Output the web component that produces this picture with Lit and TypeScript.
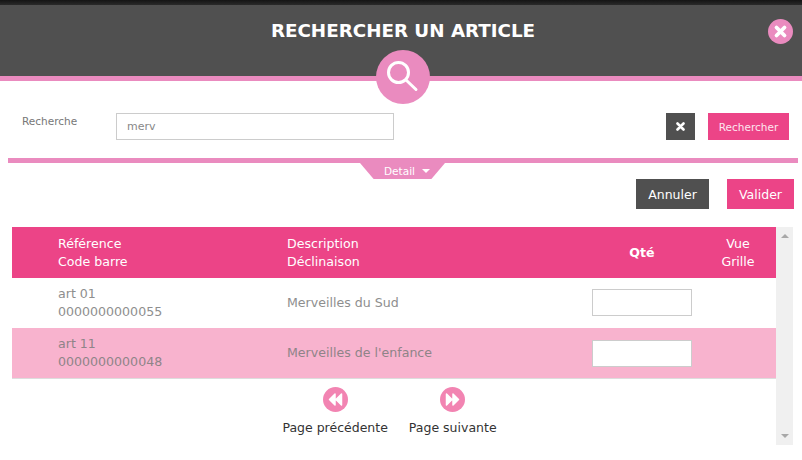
import { LitElement, html, css, svg } from 'lit';
import { customElement } from 'lit/decorators.js';

const rows = [
    { ref: 'art 01', code: '0000000000055', desc: 'Merveilles du Sud' },
    { ref: 'art 11', code: '0000000000048', desc: "Merveilles de l'enfance" },
];

const rewind = svg`<path d="M12 7 L6.5 12.5 L12 18 Z M18.5 7 L13 12.5 L18.5 18 Z" />`;
const forward = svg`<path d="M6.5 7 L12 12.5 L6.5 18 Z M13 7 L18.5 12.5 L13 18 Z" />`;

@customElement('app-root')
export class AppRoot extends LitElement {
    public static override styles = css`
        :host {
            display: block;
            width: 802px;
            height: 460px;
            overflow: hidden;
            background: #fff;
            font-family: "DejaVu Sans", sans-serif;
        }

        .topbar {
            height: 5px;
            background: linear-gradient(#141414, #2a2a2a);
        }

        .header {
            position: relative;
            height: 71px;
            display: flex;
            align-items: flex-start;
            justify-content: center;
            background: #505050;
            border-bottom: 5px solid #ea8bbf;
        }

        .header h1 {
            margin: 14px 0 0 4px;
            font-family: "DejaVu Sans", sans-serif;
            font-size: 18.3px;
            line-height: 24px;
            font-weight: 700;
            color: #fff;
        }

        .close {
            position: absolute;
            left: 768px;
            top: 14px;
            width: 25px;
            height: 25px;
            display: block;
        }

        .loupe {
            position: absolute;
            left: 376px;
            top: 45px;
            width: 54px;
            height: 54px;
            display: block;
        }

        .search {
            display: flex;
            align-items: flex-start;
            margin-top: 32px;
            padding: 0 13px 0 22px;
            height: 27px;
        }

        .search label {
            width: 94px;
            margin-top: 1px;
            font-size: 10.5px;
            line-height: 14px;
            color: #777;
        }

        .search input {
            box-sizing: border-box;
            width: 278px;
            height: 27px;
            padding: 0 10px;
            border: 1px solid #ccc;
            background: #fff;
            outline: none;
            font: 11px "DejaVu Sans", sans-serif;
            color: #888;
        }

        .clear {
            width: 29px;
            height: 27px;
            margin-left: auto;
            display: flex;
            align-items: center;
            justify-content: center;
            background: #505050;
        }

        .btn {
            display: flex;
            align-items: center;
            justify-content: center;
            color: #fff;
            font-size: 12.5px;
            background: #ec4487;
        }

        .btn.dark {
            background: #505050;
        }

        .search .btn {
            width: 81px;
            height: 27px;
            margin-left: 13px;
            font-size: 10.5px;
            color: #fde6ef;
        }

        .rule {
            height: 5px;
            margin: 18px 4px 0 8px;
            background: #ea8bbf;
        }

        .tab {
            width: 85px;
            height: 16px;
            margin-left: 360px;
            padding-left: 9px;
            box-sizing: border-box;
            display: flex;
            align-items: center;
            justify-content: center;
            gap: 7px;
            background: #ea8bbf;
            clip-path: polygon(0 0, 100% 0, 84% 100%, 16% 100%);
            color: #fff;
            font-size: 10.5px;
        }

        .tab i {
            width: 0;
            height: 0;
            border: 4px solid transparent;
            border-top: 4px solid #fff;
            border-bottom: 0;
        }

        .actions {
            display: flex;
            justify-content: flex-end;
            gap: 18px;
            padding-right: 8px;
            height: 30px;
        }

        .actions .dark {
            width: 73px;
        }

        .actions .btn:last-child {
            width: 67px;
        }

        .scroller {
            display: flex;
            width: 781px;
            height: 218px;
            margin: 18px 0 0 12px;
        }

        .list {
            flex: 1;
            min-width: 0;
        }

        .row {
            display: grid;
            grid-template-columns: 275px 293px 124px 72px;
            align-items: center;
            height: 50px;
            font-size: 12.6px;
            line-height: 18px;
            color: #8e8e8e;
        }

        .row.head {
            height: 51px;
            background: #ec4487;
            color: #fff;
        }

        .row.alt {
            background: #f8b3ce;
            color: #8f8488;
            border-bottom: 1px solid #ddd;
        }

        .row > div:first-child {
            padding-left: 46px;
        }

        .row .qty {
            text-align: center;
            font-weight: 700;
        }

        .row .view {
            padding-right: 4px;
            text-align: center;
        }

        .row input {
            box-sizing: border-box;
            display: block;
            width: 100px;
            height: 27px;
            margin: -2px auto 0;
            border: 1px solid #ccc;
            background: #fff;
        }

        .row.alt input {
            margin-top: 0;
        }

        .pager {
            display: flex;
            justify-content: center;
            gap: 21px;
            margin: 8px 9px 0 0;
        }

        .pager div {
            display: flex;
            flex-direction: column;
            align-items: center;
            gap: 8px;
            font-size: 12.5px;
            line-height: 16px;
            color: #333;
        }

        .pager svg {
            display: block;
            width: 25px;
            height: 25px;
            fill: #fff;
            stroke: #fff;
            stroke-width: 1.5;
            stroke-linejoin: round;
        }

        .scrollbar {
            width: 17px;
            display: flex;
            flex-direction: column;
            justify-content: space-between;
            align-items: center;
            padding: 7px 0;
            box-sizing: border-box;
            background: #f0f0f0;
        }

        .scrollbar i {
            width: 0;
            height: 0;
            border-left: 4px solid transparent;
            border-right: 4px solid transparent;
        }

        .scrollbar .up {
            border-bottom: 4px solid #a8a8a8;
        }

        .scrollbar .down {
            border-top: 4px solid #a8a8a8;
        }
    `;

    private pagerIcon(glyph: unknown) {
        return html`<svg viewBox="0 0 25 25">
            <circle cx="12.5" cy="12.5" r="12.5" fill="#f284b2" stroke="none" />
            ${glyph}
        </svg>`;
    }

    override render() {
        return html`
            <div class="topbar"></div>
            <div class="header">
                <h1>RECHERCHER UN ARTICLE</h1>
                <svg class="close" viewBox="0 0 25 25">
                    <circle cx="12.5" cy="12.5" r="12.5" fill="#ea8bbf" />
                    <path d="M8.5 8.5 L16.5 16.5 M16.5 8.5 L8.5 16.5" stroke="#fff" stroke-width="3.8" stroke-linecap="round" />
                </svg>
                <svg class="loupe" viewBox="0 0 54 54">
                    <circle cx="27" cy="27" r="27" fill="#ea8bbf" />
                    <circle cx="22.5" cy="22.5" r="10" fill="none" stroke="#fff" stroke-width="3" />
                    <path d="M30 30 L40 39.5" stroke="#fff" stroke-width="3" stroke-linecap="round" />
                </svg>
            </div>

            <div class="search">
                <label>Recherche</label>
                <input type="text" .value=${'merv'} />
                <div class="clear">
                    <svg width="9" height="9" viewBox="0 0 9 9">
                        <path d="M1.5 1.5 L7.5 7.5 M7.5 1.5 L1.5 7.5" stroke="#fff" stroke-width="2.6" stroke-linecap="round" />
                    </svg>
                </div>
                <div class="btn">Rechercher</div>
            </div>

            <div class="rule"></div>
            <div class="tab">Detail <i></i></div>

            <div class="actions">
                <div class="btn dark">Annuler</div>
                <div class="btn">Valider</div>
            </div>

            <div class="scroller">
                <div class="list">
                    <div class="row head">
                        <div>Référence<br />Code barre</div>
                        <div>Description<br />Déclinaison</div>
                        <div class="qty">Qté</div>
                        <div class="view">Vue<br />Grille</div>
                    </div>
                    ${rows.map((r, i) => html`
                        <div class="row ${i % 2 ? 'alt' : ''}">
                            <div>${r.ref}<br />${r.code}</div>
                            <div>${r.desc}</div>
                            <div><input type="text" /></div>
                            <div></div>
                        </div>
                    `)}
                    <div class="pager">
                        <div>${this.pagerIcon(rewind)}Page précédente</div>
                        <div>${this.pagerIcon(forward)}Page suivante</div>
                    </div>
                </div>
                <div class="scrollbar"><i class="up"></i><i class="down"></i></div>
            </div>
        `;
    }
}
